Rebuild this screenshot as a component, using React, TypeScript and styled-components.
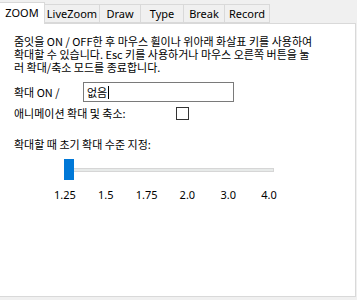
import { createGlobalStyle } from "styled-components"
import styled from "styled-components"

const tabs = ["ZOOM", "LiveZoom", "Draw", "Type", "Break", "Record"]
const tabWidths = [45, 55, 41, 43, 41, 45]
const ticks = ["1.25", "1.5", "1.75", "2.0", "3.0", "4.0"]

export default function App() {
    return (
        <>
            <GlobalStyle />
            <Window>
                <TabBar>
                    {tabs.map((t, i) => (
                        <Tab key={t} selected={i === 0} w={tabWidths[i]}>{t}</Tab>
                    ))}
                </TabBar>
                <Panel>
                    <Description>
                        <Line>줌잇을 ON / OFF한 후 마우스 휠이나 위아래 화살표 키를 사용하여</Line>
                        <Line>확대할 수 있습니다. Esc 키를 사용하거나 마우스 오른쪽 버튼을 눌</Line>
                        <Line>러 확대/축소 모드를 종료합니다.</Line>
                    </Description>
                    <HotkeyRow>
                        <Label>확대 ON /</Label>
                        <TextBox>없음<Caret /></TextBox>
                    </HotkeyRow>
                    <CheckRow>
                        <Label>애니메이션 확대 및 축소:</Label>
                        <CheckBox />
                    </CheckRow>
                    <SectionLabel>확대할 때 초기 확대 수준 지정:</SectionLabel>
                    <Slider>
                        <Track />
                        <Thumb />
                    </Slider>
                    <Ticks>
                        {ticks.map(t => <Tick key={t}>{t}</Tick>)}
                    </Ticks>
                </Panel>
            </Window>
        </>
    )
}

const GlobalStyle = createGlobalStyle`
    body {
        margin: 0;
        background: #f0f0f0;
        font-family: "Noto Sans CJK KR", "Noto Sans", sans-serif;
        color: #000;
    }
`

const Window = styled.div`
    width: 357px;
    height: 300px;
    background: #f0f0f0;
    display: flex;
    flex-direction: column;
`

const TabBar = styled.div`
    display: flex;
    align-items: flex-end;
    height: 23px;
    position: relative;
    z-index: 1;
`

const Tab = styled.div<{ selected: boolean; w: number }>`
    box-sizing: border-box;
    width: ${p => p.w}px;
    height: ${p => (p.selected ? "22px" : "19px")};
    margin-bottom: ${p => (p.selected ? "-1px" : "0")};
    background: ${p => (p.selected ? "#fff" : "#f0f0f0")};
    border: 1px solid #d9d9d9;
    border-left: none;
    border-bottom: ${p => (p.selected ? "none" : "1px solid #d9d9d9")};
    font-family: "Noto Sans", sans-serif;
    font-size: 11px;
    line-height: 16px;
    padding-top: ${p => (p.selected ? "2px" : "1px")};
    text-align: center;
`

const Panel = styled.div`
    box-sizing: border-box;
    width: 356px;
    height: 274px;
    background: #fff;
    border: 1px solid #d9d9d9;
    border-left: none;
    padding: 11px 0 0 14px;
    display: flex;
    flex-direction: column;
    font-size: 11px;
`

const Description = styled.div`
    display: flex;
    flex-direction: column;
    white-space: nowrap;
`

const Line = styled.div`
    height: 13px;
    line-height: 13px;
`

const HotkeyRow = styled.div`
    display: grid;
    grid-template-columns: 69px 151px;
    align-items: center;
    margin-top: 8px;
    height: 20px;
`

const Label = styled.span`
    line-height: 13px;
`

const TextBox = styled.div`
    box-sizing: border-box;
    height: 20px;
    border: 1px solid #7a7a7a;
    padding-left: 3px;
    display: flex;
    align-items: center;
    line-height: 13px;
`

const Caret = styled.span`
    width: 1px;
    height: 13px;
    background: #000;
    margin-left: 1px;
`

const CheckRow = styled.div`
    display: flex;
    align-items: center;
    justify-content: space-between;
    width: 175px;
    margin-top: 5px;
    height: 13px;
`

const CheckBox = styled.div`
    box-sizing: border-box;
    width: 13px;
    height: 13px;
    border: 1px solid #333;
    background: #fff;
`

const SectionLabel = styled.div`
    margin-top: 18px;
    line-height: 13px;
`

const Slider = styled.div`
    position: relative;
    margin: 8px 0 0 50px;
    width: 210px;
    height: 21px;
`

const Track = styled.div`
    position: absolute;
    left: 0;
    right: 0;
    top: 9px;
    height: 4px;
    box-sizing: border-box;
    background: #e7eae9;
    border: 1px solid #d6d6d6;
`

const Thumb = styled.div`
    position: absolute;
    left: 0;
    top: 0;
    width: 10px;
    height: 21px;
    background: #0078d7;
`

const Ticks = styled.div`
    display: flex;
    justify-content: space-between;
    width: 234px;
    margin: 8px 0 0 36px;
`

const Tick = styled.span`
    width: 30px;
    text-align: center;
    line-height: 13px;
    font-family: "Noto Sans", sans-serif;
    font-size: 11px;
`
